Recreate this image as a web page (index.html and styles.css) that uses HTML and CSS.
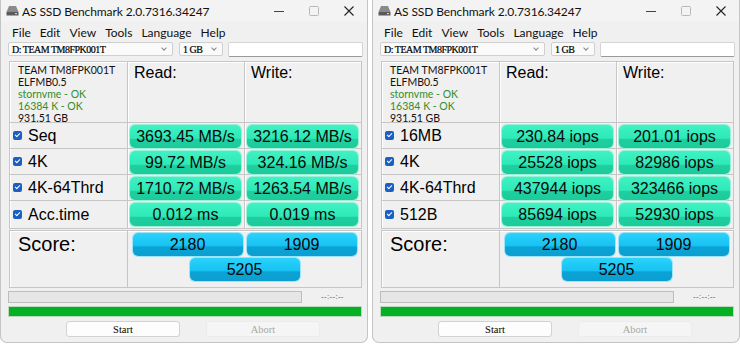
FILE: index.html
```html
<!DOCTYPE html>
<html>
<head>
<meta charset="utf-8">
<link rel="stylesheet" href="styles.css">
</head>
<body>
<div class="screen">
  <div class="win">
    <div class="titlebar">
      <svg class="appicon" width="13" height="11" viewBox="0 0 13 11"><path d="M3 1h7l2.5 6H0.5z" fill="#8a8a8a"/><rect x="0.5" y="7" width="12" height="3.5" fill="#5a5a5a"/><rect x="9" y="8" width="2" height="1.2" fill="#cfcfcf"/></svg>
      <span class="title">AS SSD Benchmark 2.0.7316.34247</span>
      <div class="controls">
        <svg width="10" height="10" viewBox="0 0 10 10"><path d="M0 5.5h10" stroke="#444" stroke-width="1"/></svg>
        <svg width="10" height="10" viewBox="0 0 10 10"><rect x="0.5" y="0.5" width="9" height="9" rx="1" fill="none" stroke="#b8b8b8" stroke-width="1"/></svg>
        <svg width="10" height="10" viewBox="0 0 10 10"><path d="M0.5 0.5l9 9M9.5 0.5l-9 9" stroke="#222" stroke-width="1.1"/></svg>
      </div>
    </div>
    <div class="menubar"><span>File</span><span>Edit</span><span>View</span><span>Tools</span><span>Language</span><span>Help</span></div>
    <div class="toolbar">
      <div class="combo drive"><span>D: TEAM TM8FPK001T</span><i class="chev"></i></div>
      <div class="combo size"><span>1 GB</span><i class="chev"></i></div>
      <div class="textbox"></div>
    </div>
    <div class="results">
      <div class="cell info">
        <div>TEAM TM8FPK001T</div>
        <div>ELFMB0.5</div>
        <div class="ok">stornvme - OK</div>
        <div class="ok">16384 K - OK</div>
        <div>931.51 GB</div>
      </div>
      <div class="cell head">Read:</div>
      <div class="cell head last">Write:</div>
      <div class="cell label"><i class="check"></i>Seq</div>
      <div class="cell val"><div class="bar">3693.45 MB/s</div></div>
      <div class="cell val last"><div class="bar">3216.12 MB/s</div></div>
      <div class="cell label"><i class="check"></i>4K</div>
      <div class="cell val"><div class="bar">99.72 MB/s</div></div>
      <div class="cell val last"><div class="bar">324.16 MB/s</div></div>
      <div class="cell label"><i class="check"></i>4K-64Thrd</div>
      <div class="cell val"><div class="bar">1710.72 MB/s</div></div>
      <div class="cell val last"><div class="bar">1263.54 MB/s</div></div>
      <div class="cell label bottom"><i class="check"></i>Acc.time</div>
      <div class="cell val bottom"><div class="bar">0.012 ms</div></div>
      <div class="cell val last bottom"><div class="bar">0.019 ms</div></div>
    </div>
    <div class="score">
      <div class="score-label">Score:</div>
      <div class="score-vals">
        <div class="sbar">2180</div>
        <div class="sbar">1909</div>
        <div class="sbar">5205</div>
      </div>
    </div>
    <div class="progress-row">
      <div class="progress"></div>
      <span class="time">--:--:--</span>
    </div>
    <div class="greenbar"></div>
    <div class="buttons">
      <div class="btn">Start</div>
      <div class="btn disabled">Abort</div>
    </div>
  </div>

  <div class="win">
    <div class="titlebar">
      <svg class="appicon" width="13" height="11" viewBox="0 0 13 11"><path d="M3 1h7l2.5 6H0.5z" fill="#8a8a8a"/><rect x="0.5" y="7" width="12" height="3.5" fill="#5a5a5a"/><rect x="9" y="8" width="2" height="1.2" fill="#cfcfcf"/></svg>
      <span class="title">AS SSD Benchmark 2.0.7316.34247</span>
      <div class="controls">
        <svg width="10" height="10" viewBox="0 0 10 10"><path d="M0 5.5h10" stroke="#444" stroke-width="1"/></svg>
        <svg width="10" height="10" viewBox="0 0 10 10"><rect x="0.5" y="0.5" width="9" height="9" rx="1" fill="none" stroke="#b8b8b8" stroke-width="1"/></svg>
        <svg width="10" height="10" viewBox="0 0 10 10"><path d="M0.5 0.5l9 9M9.5 0.5l-9 9" stroke="#222" stroke-width="1.1"/></svg>
      </div>
    </div>
    <div class="menubar"><span>File</span><span>Edit</span><span>View</span><span>Tools</span><span>Language</span><span>Help</span></div>
    <div class="toolbar">
      <div class="combo drive"><span>D: TEAM TM8FPK001T</span><i class="chev"></i></div>
      <div class="combo size"><span>1 GB</span><i class="chev"></i></div>
      <div class="textbox"></div>
    </div>
    <div class="results">
      <div class="cell info">
        <div>TEAM TM8FPK001T</div>
        <div>ELFMB0.5</div>
        <div class="ok">stornvme - OK</div>
        <div class="ok">16384 K - OK</div>
        <div>931.51 GB</div>
      </div>
      <div class="cell head">Read:</div>
      <div class="cell head last">Write:</div>
      <div class="cell label"><i class="check"></i>16MB</div>
      <div class="cell val"><div class="bar">230.84 iops</div></div>
      <div class="cell val last"><div class="bar">201.01 iops</div></div>
      <div class="cell label"><i class="check"></i>4K</div>
      <div class="cell val"><div class="bar">25528 iops</div></div>
      <div class="cell val last"><div class="bar">82986 iops</div></div>
      <div class="cell label"><i class="check"></i>4K-64Thrd</div>
      <div class="cell val"><div class="bar">437944 iops</div></div>
      <div class="cell val last"><div class="bar">323466 iops</div></div>
      <div class="cell label bottom"><i class="check"></i>512B</div>
      <div class="cell val bottom"><div class="bar">85694 iops</div></div>
      <div class="cell val last bottom"><div class="bar">52930 iops</div></div>
    </div>
    <div class="score">
      <div class="score-label">Score:</div>
      <div class="score-vals">
        <div class="sbar">2180</div>
        <div class="sbar">1909</div>
        <div class="sbar">5205</div>
      </div>
    </div>
    <div class="progress-row">
      <div class="progress"></div>
      <span class="time">--:--:--</span>
    </div>
    <div class="greenbar"></div>
    <div class="buttons">
      <div class="btn">Start</div>
      <div class="btn disabled">Abort</div>
    </div>
  </div>
</div>
</body>
</html>
```

FILE: styles.css
```css
* { box-sizing: border-box; }
html, body { margin: 0; padding: 0; }
body { background: #ffffff; width: 740px; height: 346px; overflow: hidden; font-family: "Lato", "Noto Sans", sans-serif; }

.screen { display: flex; gap: 4px; }

.win {
  width: 368px;
  height: 343px;
  background: #f0f0f0;
  border: 1px solid #c4c4c4;
  border-top: none;
  border-radius: 0 0 7px 7px;
  display: flex;
  flex-direction: column;
}

.titlebar {
  height: 22px;
  display: flex;
  align-items: center;
  padding-left: 5px;
  background: #f3f3f3;
}
.appicon { margin-right: 3px; margin-top: -1px; }
.title { font-size: 12px; color: #111; letter-spacing: -0.1px; }
.controls { margin-left: auto; display: flex; align-items: center; gap: 25px; padding-right: 13px; }

.menubar {
  height: 20px;
  display: flex;
  align-items: center;
  padding-left: 11px;
  gap: 9px;
  font-size: 12px;
  color: #111;
}

.toolbar {
  height: 14px;
  display: flex;
  padding-left: 7px;
}
.combo {
  height: 14px;
  background: #fafafa;
  border: 1px solid #cfcfcf;
  border-radius: 2px;
  display: flex;
  align-items: center;
  padding-left: 3px;
  font-family: "Liberation Serif", serif;
  font-size: 10px;
  color: #000;
}
.combo span { letter-spacing: -0.5px; -webkit-text-stroke: 0.2px #000; }
.drive { width: 165px; }
.size { width: 44px; margin-left: 6px; }
.chev {
  margin-left: auto;
  margin-right: 6px;
  width: 4px; height: 4px;
  border-right: 1px solid #888;
  border-bottom: 1px solid #888;
  transform: rotate(45deg);
  margin-top: -3px;
}
.textbox {
  width: 135px;
  margin-left: 5px;
  height: 15px;
  background: #fff;
  border: 1px solid #d4d4d4;
  border-bottom-color: #9a9a9a;
  border-radius: 2px;
}

.results {
  margin: 5px 0 0 8px;
  width: 353px;
  border: 1px solid #c6c6c6;
  box-shadow: inset 1px 1px 0 #fff;
  display: grid;
  grid-template-columns: 118px 117px 1fr;
  grid-template-rows: 61px 26px 26px 26px 27px;
}
.cell {
  border-right: 1px solid #c6c6c6;
  border-bottom: 1px solid #c6c6c6;
  box-shadow: inset 1px 0 0 #fff;
}
.cell.last { border-right: none; }
.cell.bottom { border-bottom: none; }

.info {
  padding: 2px 0 0 8px;
  font-size: 10.5px;
  line-height: 12px;
  color: #111;
}
.info .ok { color: #2f8f2f; }

.head {
  font-family: "Liberation Sans", Arial, sans-serif;
  font-size: 16px;
  padding: 2px 0 0 6px;
  color: #000;
}

.label {
  display: flex;
  align-items: center;
  font-family: "Liberation Sans", Arial, sans-serif;
  font-size: 16px;
  color: #000;
  padding-left: 3px;
}
.check {
  width: 9px; height: 9px;
  background: #1a5fc4;
  border-radius: 2px;
  margin-right: 6px;
  position: relative;
  flex: none;
}
.check::after {
  content: "";
  position: absolute;
  left: 3px; top: 1px;
  width: 2px; height: 4px;
  border-right: 1px solid #fff;
  border-bottom: 1px solid #fff;
  transform: rotate(45deg);
}

.val { padding: 2px 3px 1px 2px; }
.bar {
  height: 23px;
  border-radius: 5px;
  background: linear-gradient(#3ff2c4 0%, #2ee9b7 58%, #1fcf9f 62%, #1dca9a 100%);
  box-shadow: 0 0 0 1px #9cf0d8;
  display: flex;
  align-items: center;
  justify-content: center;
  font-family: "Liberation Sans", Arial, sans-serif;
  font-size: 16px;
  color: #0a0a0a;
}

.score {
  margin: 1px 0 0 8px;
  width: 353px;
  height: 58px;
  border: 1px solid #c6c6c6;
  box-shadow: inset 1px 1px 0 #fff;
  display: grid;
  grid-template-columns: 118px 1fr;
}
.score-label {
  border-right: 1px solid #c6c6c6;
  font-family: "Liberation Sans", Arial, sans-serif;
  font-size: 20px;
  padding: 2px 0 0 8px;
  color: #000;
}
.score-vals {
  display: flex;
  flex-wrap: wrap;
  justify-content: center;
  align-content: flex-start;
  gap: 2px 4px;
  padding-top: 2px;
}
.sbar {
  width: 110px;
  height: 23px;
  border-radius: 5px;
  background: linear-gradient(#2bd3fb 0%, #17c2f3 56%, #0aa3d6 60%, #0c9fd0 100%);
  box-shadow: 0 0 0 1px #9ee4f8;
  display: flex;
  align-items: center;
  justify-content: center;
  font-family: "Liberation Sans", Arial, sans-serif;
  font-size: 16px;
  color: #050505;
}

.progress-row {
  display: flex;
  align-items: center;
  margin: 2px 0 0 7px;
  height: 13px;
}
.progress {
  width: 294px;
  height: 12px;
  background: #e6e6e6;
  border: 1px solid #bdbdbd;
}
.time {
  margin-left: 19px;
  font-family: "Liberation Sans", Arial, sans-serif;
  font-size: 8px;
  color: #555;
  letter-spacing: 0.3px;
}

.greenbar {
  margin: 3px 0 0 7px;
  width: 354px;
  height: 11px;
  background: #06b025;
  border: 1px solid #bcd9bf;
}

.buttons {
  display: flex;
  margin: 4px 0 0 65px;
  gap: 26px;
}
.btn {
  width: 114px;
  height: 16px;
  background: #fdfdfd;
  border: 1px solid #d2d2d2;
  border-radius: 3px;
  display: flex;
  align-items: center;
  justify-content: center;
  font-family: "Liberation Serif", serif;
  font-size: 10.5px;
  color: #000;
}
.btn.disabled {
  background: #f5f5f5;
  border-color: #ececec;
  color: #a8a8a8;
}
```
